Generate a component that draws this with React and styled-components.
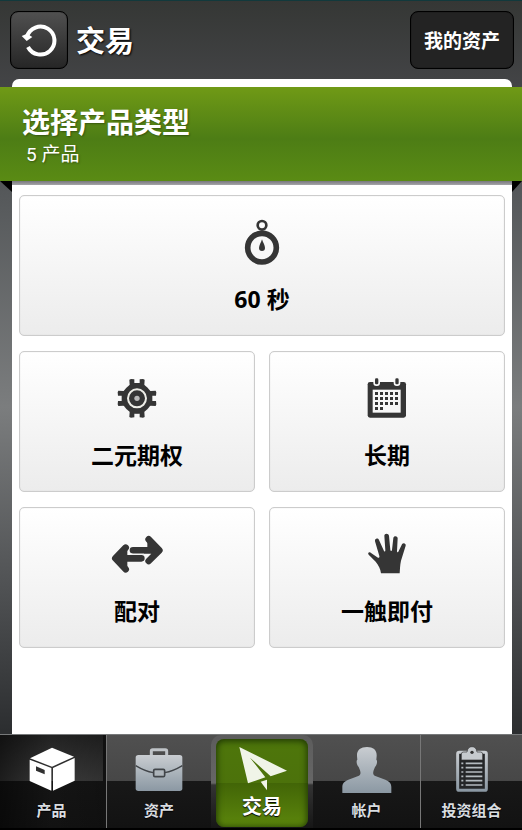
import React from "react";
import styled, { createGlobalStyle, css } from "styled-components";

const GlobalStyle = createGlobalStyle`
  *, *::before, *::after { box-sizing: border-box; }
  body {
    margin: 0;
    font-family: "Open Sans", "Noto Sans CJK SC", sans-serif;
  }
  button { font: inherit; cursor: pointer; }
  h1, h2, p { margin: 0; }
`;

const Page = styled.div`
  min-height: 100vh;
  display: flex;
  flex-direction: column;
  border-top: 1px solid #12393c;
  background: linear-gradient(#353735 0%, #434446 10%, #55585a 23%, #7b7d7e 49%, #515355 70%, #2c2e30 88%);
`;

const Header = styled.header`
  display: flex;
  align-items: center;
  gap: 8px;
  padding: 10px 8px 10px 10px;
`;

const HeaderButton = styled.button`
  display: flex;
  align-items: center;
  justify-content: center;
  height: 58px;
  padding: 0 ${(p) => (p.$square ? 0 : 13)}px;
  ${(p) => p.$square && css`width: 58px;`}
  border: 1px solid #000;
  border-radius: 8px;
  background: ${(p) => (p.$square ? "linear-gradient(#505050, #262626)" : "#232323")};
  box-shadow: inset 0 0 1px #000;
  color: #fff;
  font-size: 19px;
  font-weight: 700;
`;

const Title = styled.h1`
  flex: 1;
  padding-top: 2px;
  color: #fff;
  font-size: 29px;
  line-height: 40px;
  font-weight: 700;
  text-shadow: 1px 1px 2px #000;
`;

const Sheet = styled.main`
  flex: 1;
  margin: 0 10px 0 12px;
  padding-top: 8px;
  border-radius: 7px 7px 0 0;
  background: #fff;
`;

const Banner = styled.section`
  position: relative;
  margin: 0 -10px 0 -12px;
  padding: 15px 22px 13px;
  min-height: 94px;
  color: #fff;
  background: linear-gradient(#709a16 0%, #4d7d15 55%, #5a8b14 100%);
  text-shadow: 1px 1px 2px rgba(0, 0, 0, 0.35);

  &::before, &::after {
    content: "";
    position: absolute;
    top: 100%;
    height: 11px;
    background: #000;
  }
  &::before {
    left: 0;
    width: 12px;
    clip-path: polygon(0 0, 100% 0, 100% 100%);
  }
  &::after {
    right: 0;
    width: 10px;
    clip-path: polygon(0 0, 100% 0, 0 100%);
  }
`;

const BannerTitle = styled.h2`
  font-size: 28px;
  line-height: 40px;
  font-weight: 700;
`;

const BannerNote = styled.p`
  padding-left: 4px;
  font-family: Roboto, "Noto Sans CJK SC", sans-serif;
  font-size: 19px;
  line-height: 26px;
`;

const BannerShadow = styled.div`
  height: 4px;
  background: linear-gradient(#77777c, #a5a5a8);
`;

const Products = styled.div`
  display: grid;
  grid-template-columns: 1fr 1fr;
  gap: 15px 14px;
  padding: 10px 7px 16px;
`;

const Card = styled.button`
  display: flex;
  flex-direction: column;
  align-items: center;
  gap: 16px;
  padding: 23px 8px 20px;
  ${(p) => p.$wide && css`grid-column: 1 / -1;`}
  border: 1px solid #ccc;
  border-radius: 5px;
  background: linear-gradient(#fff, #ececec);
  box-shadow: inset 0 0 1px #ccc;
  color: #000;
`;

const CardIcon = styled.svg`
  width: 54px;
  height: 48px;
  color: #353535;
`;

const CardLabel = styled.span`
  font-size: 23px;
  line-height: 32px;
  font-weight: 700;
`;

const TabBar = styled.nav`
  display: grid;
  grid-template-columns: 106fr 105fr 102fr 107fr 102fr;
  border-top: 1px solid #77797a;
  border-bottom: 2px solid #000;
  background: linear-gradient(#505050 0, #474747 46px, #181818 46px, #121212 100%);
`;

const Tab = styled.a`
  display: flex;
  flex-direction: column;
  align-items: center;
  gap: 6px;
  height: 93px;
  padding-top: 11px;
  color: #d9dde0;
  font-size: 15px;
  line-height: 20px;
  font-weight: 700;
  text-decoration: none;
  text-shadow: 0 1px 1px #000;
  ${(p) => p.$divided && css`border-left: 1px solid #777;`}
  ${(p) => p.$dark && css`
    border-right: 3px solid #111;
    background:
      linear-gradient(90deg, rgba(0, 0, 0, 0.5), transparent 50%, rgba(0, 0, 0, 0.15)),
      linear-gradient(#222 0, #3a3a3a 46px, #151515 46px, #121212 100%);
  `}
`;

const ActiveTab = styled(Tab)`
  padding: 4px 5px 1px;
  border-radius: 10px 10px 0 0;
  background: linear-gradient(#5c5c5c 0, #666 48px, #333 50px, #161616 100%);
  color: #fff;
  font-size: 20px;
  line-height: 24px;
`;

const ActiveFace = styled.span`
  display: flex;
  flex-direction: column;
  align-items: center;
  gap: 1px;
  width: 100%;
  height: 88px;
  padding-top: 7px;
  border-radius: 8px;
  background: linear-gradient(#4e760b 0, #4c720b 44px, #426507 44px, #5c860c 100%);
  box-shadow: inset 0 1px 6px 1px rgba(15, 35, 0, 0.75);
`;

const TabIcon = styled.svg`
  width: 52px;
  height: 48px;
  flex: none;
`;

const Stopwatch = () => (
  <CardIcon viewBox="104 57 162 144" aria-hidden="true">
    <g fill="none" stroke="currentColor">
      <circle cx="185" cy="76" r="13" strokeWidth="8" />
      <circle cx="185" cy="143" r="43" strokeWidth="17" />
    </g>
    <path fill="currentColor" d="M185 118c3 10 9 18 9 26a9 9 0 0 1-18 0c0-8 6-16 9-26z" />
  </CardIcon>
);

const Gear = () => (
  <CardIcon viewBox="90 45 162 144" aria-hidden="true">
    <g fill="currentColor">
      <circle cx="171" cy="115" r="45" />
      {[0, 90, 180, 270].map((a) => (
        <path
          key={a}
          transform={`rotate(${a} 171 115)`}
          d="M145 84l4-10-1-15 5-2 10 1v11h16V58l10-1 5 2-1 15 4 10z"
        />
      ))}
    </g>
    <circle cx="171" cy="115" r="27" fill="none" stroke="#eeeee8" strokeWidth="6" />
    <circle cx="171" cy="115" r="8" fill="#b9b9b9" />
  </CardIcon>
);

const Calendar = () => (
  <CardIcon viewBox="90 45 162 144" aria-hidden="true">
    <rect x="113" y="66" width="115" height="107" rx="7" fill="currentColor" />
    <rect x="128" y="89" width="84" height="69" fill="#f7f7f7" />
    {[140, 201].map((x) => (
      <g key={x}>
        <rect x={x - 10} y="51" width="20" height="27" rx="9" fill="#fafafa" />
        <rect x={x - 5} y="55" width="10" height="18" rx="4" fill="currentColor" />
      </g>
    ))}
    <g fill="currentColor">
      {[0, 1, 2, 3].map((r) =>
        [0, 1, 2, 3, 4]
          .filter((c) => r < 3 || c < 2)
          .map((c) => (
            <rect key={`${r}-${c}`} x={135 + c * 15} y={96 + r * 15} width="9" height="9" />
          ))
      )}
    </g>
  </CardIcon>
);

const Arrows = () => (
  <CardIcon viewBox="90 33 162 144" aria-hidden="true">
    <g fill="none" stroke="currentColor" strokeWidth="20" strokeLinecap="round" strokeLinejoin="round">
      <path d="M184 115H110M137 83L106 115L137 148" />
      <path d="M159 91H233M206 58L238 91L206 123" />
    </g>
    <path fill="currentColor" d="M106 115l36-32v65zM238 91l-36-32v22z" />
    <path fill="none" stroke="#f1f1f1" strokeWidth="4" d="M150 103H192" />
  </CardIcon>
);

const Hand = () => (
  <CardIcon viewBox="90 33 162 144" aria-hidden="true">
    <path
      fill="currentColor"
      d="M153 160c-2-15-7-23-16-35l-21-21c-4-5 1-9 6-6l22 15c3 1 5-1 4-5l-13-44c-2-9 9-12 12-4l15 33c2 3 4 2 4-2l-3-44c0-8 13-8 14 0l4 43c1 4 4 4 5 0l4-36c1-8 13-7 13 1l-2 39c0 3 2 4 4 1l11-22c3-6 13-3 11 4l-14 45c-3 13-3 27-4 38z"
    />
  </CardIcon>
);

const Silver = ({ id }) => (
  <defs>
    <linearGradient id={id} x1="0" y1="0" x2="0" y2="1">
      <stop offset="0" stopColor="#c9cdd1" />
      <stop offset="1" stopColor="#8b98a3" />
    </linearGradient>
  </defs>
);

const BoxIcon = () => (
  <TabIcon viewBox="76 63 156 144" aria-hidden="true">
    <path fill="#fff" d="M154 68l66 27-66 30-66-25z" />
    <path fill="#fff" d="M87 104l65 25v68l-65-29zM157 129l65-30v68l-65 30z" />
    <path fill="#303030" d="M106 124l26 11v13l-26-11z" />
  </TabIcon>
);

const Briefcase = () => (
  <TabIcon viewBox="397 63 156 144" aria-hidden="true">
    <Silver id="case-fill" />
    <path d="M452 92V78q0-4 4-4h38q4 0 4 4v14" fill="none" stroke="#bfc3c7" strokeWidth="9" />
    <rect x="405" y="90" width="140" height="108" rx="8" fill="url(#case-fill)" />
    <path d="M405 122q28 17 53 21h34q25-4 53-21" fill="none" stroke="#414549" strokeWidth="4" />
    <rect x="459" y="133" width="33" height="22" rx="4" fill="#adb4ba" stroke="#414549" strokeWidth="5" />
  </TabIcon>
);

const Plane = () => (
  <TabIcon viewBox="198 63 156 144" aria-hidden="true">
    <path fill="#f0f4e8" d="M208 66L351 137L302 154L240 98L286 157L234 175z" />
    <path fill="#f0f4e8" d="M272 170L291 164V196z" />
  </TabIcon>
);

const Person = () => (
  <TabIcon viewBox="-8 63 156 144" aria-hidden="true">
    <Silver id="person-fill" />
    <path
      fill="url(#person-fill)"
      d="M70 66c19 0 30 9 29 27l-1 11c4 2 2 17-4 22l-4 10c-3 10-2 15 7 18l28 10c13 5 18 12 18 22v18H-4v-18c0-10 5-17 18-22l28-10c9-3 10-8 7-18l-4-10c-6-5-8-20-4-22l-1-11c-1-18 11-27 30-27z"
    />
  </TabIcon>
);

const Clipboard = () => (
  <TabIcon viewBox="312 63 156 144" aria-hidden="true">
    <Silver id="clip-fill" />
    <rect x="347" y="82" width="86" height="114" rx="5" fill="#242628" stroke="url(#clip-fill)" strokeWidth="9" />
    <path
      fill="#c6cace"
      stroke="#333"
      strokeWidth="2"
      d="M358 105V87q0-6 7-6h10q2-16 15-16t15 16h10q7 0 7 6v18z"
    />
    <circle cx="390" cy="82" r="5" fill="#333" />
    {[115, 128, 141, 154, 167, 180].map((y) => (
      <path key={y} d={`M358 ${y}h6M371 ${y}h50`} stroke="#b4bbc0" strokeWidth="5" />
    ))}
  </TabIcon>
);

const products = [
  { label: "60 秒", Icon: Stopwatch, wide: true },
  { label: "二元期权", Icon: Gear },
  { label: "长期", Icon: Calendar },
  { label: "配对", Icon: Arrows },
  { label: "一触即付", Icon: Hand },
];

export default function App() {
  return (
    <>
      <GlobalStyle />
      <Page>
        <Header>
          <HeaderButton $square aria-label="返回">
            <svg width="36" height="36" viewBox="65 66 108 108" aria-hidden="true">
              <path d="M83 110A42 42 0 1 1 86 141" fill="none" stroke="#fff" strokeWidth="12" />
              <path d="M67 108l16-7 16 10-17 12z" fill="#fff" />
            </svg>
          </HeaderButton>
          <Title>交易</Title>
          <HeaderButton>我的资产</HeaderButton>
        </Header>
        <Sheet>
          <Banner>
            <BannerTitle>选择产品类型</BannerTitle>
            <BannerNote>5 产品</BannerNote>
          </Banner>
          <BannerShadow />
          <Products>
            {products.map(({ label, Icon, wide }) => (
              <Card key={label} $wide={wide}>
                <Icon />
                <CardLabel>{label}</CardLabel>
              </Card>
            ))}
          </Products>
        </Sheet>
        <TabBar>
          <Tab href="#products" $dark>
            <BoxIcon />
            产品
          </Tab>
          <Tab href="#assets" $divided>
            <Briefcase />
            资产
          </Tab>
          <ActiveTab href="#trade" aria-current="page">
            <ActiveFace>
              <Plane />
              交易
            </ActiveFace>
          </ActiveTab>
          <Tab href="#account">
            <Person />
            帐户
          </Tab>
          <Tab href="#portfolio" $divided>
            <Clipboard />
            投资组合
          </Tab>
        </TabBar>
      </Page>
    </>
  );
}
